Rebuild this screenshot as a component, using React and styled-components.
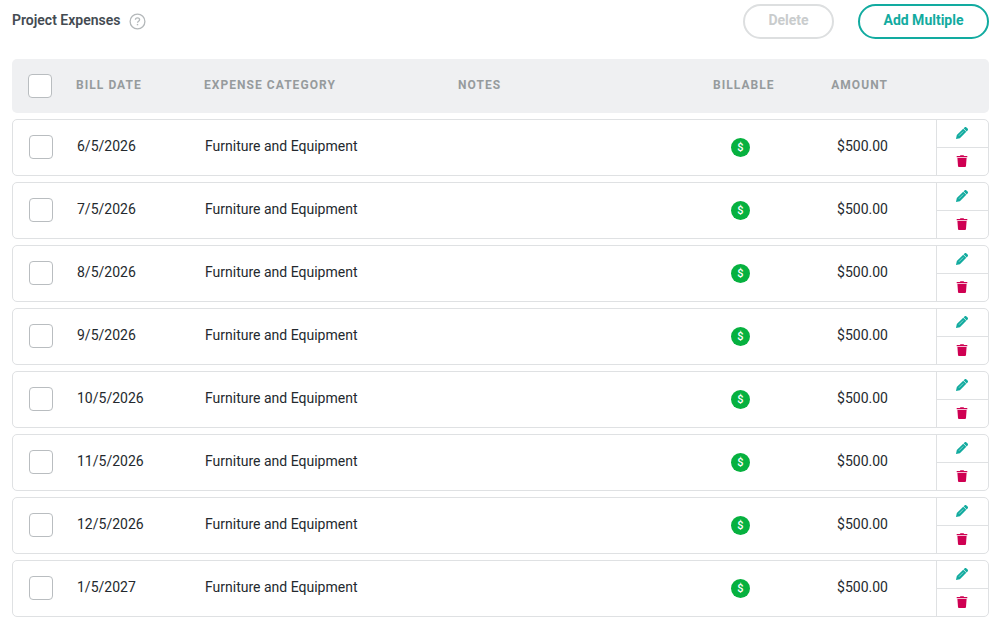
import React, { useState } from "react";
import styled, { createGlobalStyle, css } from "styled-components";

const GlobalStyle = createGlobalStyle`
  * {
    box-sizing: border-box;
  }

  body {
    margin: 0;
    background: #ffffff;
    font-family: Roboto, "Liberation Sans", sans-serif;
    font-size: 14px;
    color: #24292e;
  }
`;

const Container = styled.div`
  padding: 4px 13px 5px 12px;
`;

const TopBar = styled.div`
  display: flex;
  justify-content: space-between;
  align-items: flex-start;
  height: 55px;
`;

const TitleGroup = styled.div`
  display: flex;
  align-items: center;
  gap: 8.5px;
  height: 33px;
`;

const Title = styled.h2`
  margin: 0;
  padding-bottom: 2px;
  font-size: 14px;
  font-weight: 600;
  line-height: 20px;
  color: #444b52;
`;

const HelpButton = styled.button`
  display: flex;
  padding: 1px 0 0;
  border: none;
  background: none;
  color: #b4b8ba;
  cursor: pointer;
`;

const Actions = styled.div`
  display: flex;
  gap: 24px;
`;

const PillButton = styled.button`
  width: ${(props) => props.$width}px;
  height: 35px;
  padding: 0 0 3px;
  border: 2px solid #12aba0;
  border-radius: 18px;
  background: #ffffff;
  color: #12aba0;
  font-family: inherit;
  font-size: 14px;
  font-weight: 700;
  cursor: pointer;

  &:disabled {
    border-color: #dddfe0;
    color: #c9cccd;
    cursor: default;
  }
`;

const gridColumns = css`
  display: grid;
  grid-template-columns: 48px 128px 254px 255px 62px 113px 1fr;
  align-items: center;
  padding-left: 16px;
`;

const TableHead = styled.div`
  ${gridColumns}
  height: 54px;
  border-radius: 5px;
  background: #eff0f2;
`;

const HeadCell = styled.div`
  padding-bottom: 2px;
  color: #969b9d;
  font-size: 12px;
  font-weight: 700;
  letter-spacing: 1.05px;
  line-height: 16px;
  white-space: nowrap;
  text-align: ${(props) => props.$align || "left"};
`;

const Rows = styled.div`
  display: flex;
  flex-direction: column;
  gap: 6px;
  margin-top: 6px;
`;

const Row = styled.div`
  ${gridColumns}
  height: 57px;
  border: 1px solid #dfe1e3;
  border-radius: 5px;
  background: #ffffff;

  input {
    margin-bottom: 1px;
  }
`;

const Cell = styled.div`
  padding-bottom: 3px;
  line-height: 20px;
  white-space: nowrap;
`;

const AmountCell = styled(Cell)`
  padding-right: 1px;
  text-align: right;
`;

const Checkbox = styled.input`
  appearance: none;
  width: 24px;
  height: 24px;
  margin: 0;
  border: 1px solid #b9bdc0;
  border-radius: 4px;
  background: #ffffff;
  cursor: pointer;

  &:checked {
    border-color: #12aba0;
    background: #12aba0;
  }
`;

const BillableBadge = styled.span`
  display: flex;
  align-items: center;
  justify-content: center;
  width: 19px;
  height: 19px;
  margin-left: 17px;
  border-radius: 50%;
  background: #06b13f;
  color: #ffffff;
  font-size: 11px;
  font-weight: 500;
  line-height: 19px;
`;

const RowActions = styled.div`
  display: flex;
  flex-direction: column;
  justify-self: end;
  width: 52px;
  height: 55px;
  border-left: 1px solid #dfe1e3;
`;

const IconButton = styled.button`
  display: flex;
  flex: 1 1 0;
  align-items: center;
  justify-content: center;
  padding: 0 1px 1px 0;
  border: none;
  background: none;
  color: ${(props) => props.$color};
  cursor: pointer;

  & + & {
    border-top: 1px solid #dfe1e3;
  }
`;

const HelpIcon = () => (
  <svg width="17" height="17" viewBox="0 0 17 17" fill="none" stroke="currentColor">
    <circle cx="8.5" cy="8.5" r="7.4" strokeWidth="1.3" />
    <path d="M6.4 6.8c0-1.2.9-2 2.1-2s2.1.7 2.1 1.9c0 1.5-2.1 1.5-2.1 3.1" strokeWidth="1.3" />
    <path d="M8.5 10.9v1.4" strokeWidth="1.4" />
  </svg>
);

const PencilIcon = () => (
  <svg width="12" height="12" viewBox="0 0 12 12" fill="currentColor">
    <path d="M0 12l.8-3.9 6.4-6.4 3.1 3.1-6.4 6.4z" />
    <path d="M7.6 1.3L8.5.4c.6-.6 1.4-.6 2 0l1.1 1.1c.6.6.6 1.4 0 2l-.9.9z" />
    <path d="M3 8.7l4.3-4.3" stroke="#ffffff" strokeOpacity=".7" strokeWidth=".7" />
  </svg>
);

const TrashIcon = () => (
  <svg width="12" height="12" viewBox="0 0 12 12" fill="currentColor">
    <path d="M.7 1h3.1l.7-.8h3l.7.8h3.1v1.3H.7z" />
    <path d="M1.4 3h9.2l-.6 8.1c0 .5-.4.9-.9.9H2.9c-.5 0-.9-.4-.9-.9z" />
  </svg>
);

const dates = [
  "6/5/2026",
  "7/5/2026",
  "8/5/2026",
  "9/5/2026",
  "10/5/2026",
  "11/5/2026",
  "12/5/2026",
  "1/5/2027",
];

const initialExpenses = dates.map((date, index) => ({
  id: index + 1,
  date,
  category: "Furniture and Equipment",
  notes: "",
  billable: true,
  amount: 500,
}));

function ProjectExpenses() {
  const [expenses, setExpenses] = useState(initialExpenses);
  const [selected, setSelected] = useState([]);

  const allSelected = expenses.length > 0 && selected.length === expenses.length;

  const toggleAll = () => {
    setSelected(allSelected ? [] : expenses.map((expense) => expense.id));
  };

  const toggleOne = (id) => {
    setSelected((prev) =>
      prev.includes(id) ? prev.filter((item) => item !== id) : [...prev, id]
    );
  };

  const removeExpenses = (ids) => {
    setExpenses((prev) => prev.filter((expense) => !ids.includes(expense.id)));
    setSelected((prev) => prev.filter((id) => !ids.includes(id)));
  };

  return (
    <Container>
      <GlobalStyle />
      <TopBar>
        <TitleGroup>
          <Title>Project Expenses</Title>
          <HelpButton>
            <HelpIcon />
          </HelpButton>
        </TitleGroup>
        <Actions>
          <PillButton
            $width={91}
            disabled={selected.length === 0}
            onClick={() => removeExpenses(selected)}
          >
            Delete
          </PillButton>
          <PillButton $width={131}>Add Multiple</PillButton>
        </Actions>
      </TopBar>

      <TableHead>
        <Checkbox type="checkbox" checked={allSelected} onChange={toggleAll} />
        <HeadCell>BILL DATE</HeadCell>
        <HeadCell>EXPENSE CATEGORY</HeadCell>
        <HeadCell>NOTES</HeadCell>
        <HeadCell>BILLABLE</HeadCell>
        <HeadCell $align="right">AMOUNT</HeadCell>
      </TableHead>

      <Rows>
        {expenses.map((expense) => (
          <Row key={expense.id}>
            <Checkbox
              type="checkbox"
              checked={selected.includes(expense.id)}
              onChange={() => toggleOne(expense.id)}
            />
            <Cell>{expense.date}</Cell>
            <Cell>{expense.category}</Cell>
            <Cell>{expense.notes}</Cell>
            <div>{expense.billable && <BillableBadge>$</BillableBadge>}</div>
            <AmountCell>${expense.amount.toFixed(2)}</AmountCell>
            <RowActions>
              <IconButton $color="#12ab9f">
                <PencilIcon />
              </IconButton>
              <IconButton $color="#cf0052" onClick={() => removeExpenses([expense.id])}>
                <TrashIcon />
              </IconButton>
            </RowActions>
          </Row>
        ))}
      </Rows>
    </Container>
  );
}

export default ProjectExpenses;
